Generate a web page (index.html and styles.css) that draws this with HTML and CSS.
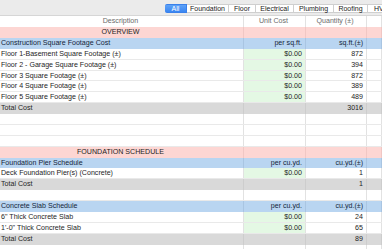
FILE: index.html
```html
<!DOCTYPE html>
<html>
<head>
<meta charset="utf-8">
<link rel="stylesheet" href="styles.css">
</head>
<body>
<div class="toolbar">
  <div class="seg">
    <span class="tab active w-all">All</span>
    <span class="tab w-found">Foundation</span>
    <span class="tab w-floor">Floor</span>
    <span class="tab w-elec">Electrical</span>
    <span class="tab w-plumb">Plumbing</span>
    <span class="tab w-roof">Roofing</span>
    <span class="tab w-hv">HVAC</span>
  </div>
</div>
<div class="sheet">
  <div class="row head"><div class="c">Description</div><div class="c">Unit Cost</div><div class="c">Quantity (±)</div><div class="c"></div></div>
  <div class="row section"><div class="c">OVERVIEW</div><div class="c"></div><div class="c"></div><div class="c"></div></div>
  <div class="row group"><div class="c">Construction Square Footage Cost</div><div class="c">per sq.ft.</div><div class="c">sq.ft.(±)</div><div class="c"></div></div>
  <div class="row item"><div class="c">Floor 1-Basement Square Footage (±)</div><div class="c">$0.00</div><div class="c">872</div><div class="c"></div></div>
  <div class="row item"><div class="c">Floor 2 - Garage Square Footage (±)</div><div class="c">$0.00</div><div class="c">394</div><div class="c"></div></div>
  <div class="row item"><div class="c">Floor 3 Square Footage (±)</div><div class="c">$0.00</div><div class="c">872</div><div class="c"></div></div>
  <div class="row item"><div class="c">Floor 4 Square Footage (±)</div><div class="c">$0.00</div><div class="c">389</div><div class="c"></div></div>
  <div class="row item"><div class="c">Floor 5 Square Footage (±)</div><div class="c">$0.00</div><div class="c">489</div><div class="c"></div></div>
  <div class="row total"><div class="c">Total Cost</div><div class="c"></div><div class="c">3016</div><div class="c"></div></div>
  <div class="row blank"><div class="c"></div><div class="c"></div><div class="c"></div><div class="c"></div></div>
  <div class="row blank"><div class="c"></div><div class="c"></div><div class="c"></div><div class="c"></div></div>
  <div class="row blank"><div class="c"></div><div class="c"></div><div class="c"></div><div class="c"></div></div>
  <div class="row section"><div class="c">FOUNDATION SCHEDULE</div><div class="c"></div><div class="c"></div><div class="c"></div></div>
  <div class="row group"><div class="c">Foundation Pier Schedule</div><div class="c">per cu.yd.</div><div class="c">cu.yd.(±)</div><div class="c"></div></div>
  <div class="row item"><div class="c">Deck Foundation Pier(s) (Concrete)</div><div class="c">$0.00</div><div class="c">1</div><div class="c"></div></div>
  <div class="row total"><div class="c">Total Cost</div><div class="c"></div><div class="c">1</div><div class="c"></div></div>
  <div class="row blank"><div class="c"></div><div class="c"></div><div class="c"></div><div class="c"></div></div>
  <div class="row group"><div class="c">Concrete Slab Schedule</div><div class="c">per cu.yd.</div><div class="c">cu.yd.(±)</div><div class="c"></div></div>
  <div class="row item"><div class="c">6" Thick Concrete Slab</div><div class="c">$0.00</div><div class="c">24</div><div class="c"></div></div>
  <div class="row item"><div class="c">1'-0" Thick Concrete Slab</div><div class="c">$0.00</div><div class="c">65</div><div class="c"></div></div>
  <div class="row total"><div class="c">Total Cost</div><div class="c"></div><div class="c">89</div><div class="c"></div></div>
  <div class="row blank"><div class="c"></div><div class="c"></div><div class="c"></div><div class="c"></div></div>
</div>
</body>
</html>
```
FILE: styles.css
```css
* { box-sizing: border-box; }
html, body { margin: 0; padding: 0; background: #fff; overflow: hidden; }
body {
  font-family: "Liberation Sans", Arial, sans-serif;
  font-size: 7.1px;
  color: #1e1e1e;
  width: 382px;
  height: 249px;
}
.toolbar {
  height: 16px;
  background: #ebebeb;
  border-bottom: 1px solid #d6d6d6;
  padding: 4px 0 0 165px;
  overflow: hidden;
}
.seg {
  display: flex;
  height: 9px;
  white-space: nowrap;
}
.tab {
  flex: none;
  height: 9px;
  line-height: 9px;
  font-size: 7px;
  text-align: center;
  background: #fff;
  color: #222;
  border-top: 1px solid #cfcfcf;
  border-bottom: 1px solid #cfcfcf;
  border-right: 1px solid #cfcfcf;
  line-height: 7px;
}
.tab.active {
  background: linear-gradient(#5ea2f7, #3a86f2);
  color: #fff;
  border-color: #3a80ea;
  border-radius: 2px 0 0 2px;
}
.w-all { width: 22px; }
.w-found { width: 42px; }
.w-floor { width: 27px; }
.w-elec { width: 38px; }
.w-plumb { width: 40px; }
.w-roof { width: 34px; }
.w-hv { width: 40px; text-align: left; padding-left: 6px; }

.sheet { display: flex; flex-direction: column; }
.row {
  display: grid;
  grid-template-columns: 244px 62px 61px 1fr;
  height: 10.875px;
  line-height: 10px;
  border-bottom: 1px solid #e9e9e9;
}
.row .c {
  border-right: 1px solid #e2e2e2;
  padding: 0 3px 0 1px;
  white-space: nowrap;
  overflow: hidden;
}
.row .c:nth-child(2), .row .c:nth-child(3) { text-align: right; }
.row.head { height: 11px; border-bottom: none; color: #6b6b6b; }
.row.head .c { text-align: center; }
.row.section { background: #fdd6d3; border-bottom: none; }
.row.section .c { border-right-color: #f0c7c4; }
.row.section .c:first-child { text-align: center; }
.row.group { background: #b9d5f1; border-bottom: none; color: #14253a; }
.row.group .c { border-right-color: #a9c5e2; }
.row.item .c:nth-child(2) { background: #e4f8e4; }
.row.total { background: #d9d9d9; border-bottom: none; }
.row.total .c { border-right-color: #cdcdcd; }
```
